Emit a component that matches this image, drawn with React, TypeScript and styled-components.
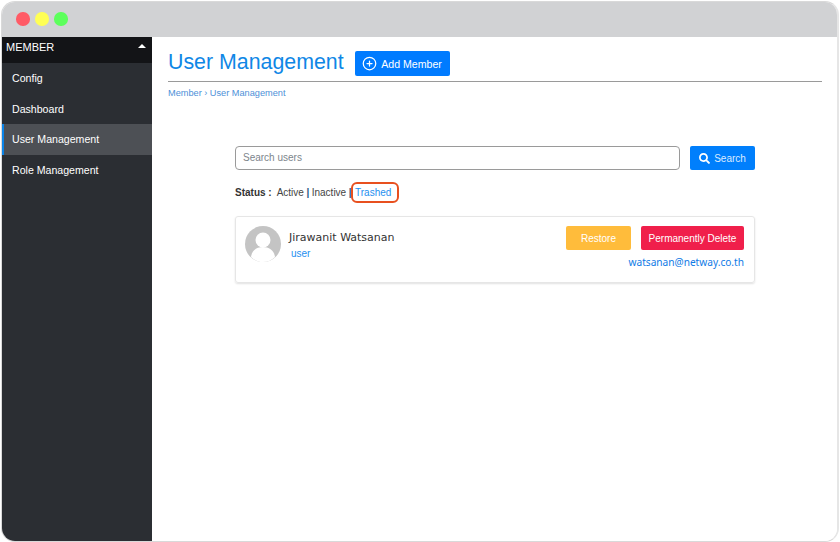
import styled, { createGlobalStyle } from "styled-components";
import { FaSearch } from "react-icons/fa";
import { FiPlusCircle } from "react-icons/fi";

const Global = createGlobalStyle`
  html, body {
    margin: 0;
    padding: 0;
    background: #fff;
    font-family: "Liberation Sans", Arial, sans-serif;
  }
  * {
    box-sizing: border-box;
  }
`;

const Page = styled.div`
  width: 840px;
  height: 542px;
  padding: 1px 1px 0 1px;
  overflow: hidden;
`;

const Frame = styled.div`
  width: 838px;
  height: 541px;
  display: flex;
  flex-direction: column;
  border: 1px solid #d9d9d9;
  border-right: 2px solid #e6e6e6;
  border-radius: 14px;
  overflow: hidden;
`;

const TitleBar = styled.div`
  height: 35px;
  flex-shrink: 0;
  display: flex;
  align-items: center;
  gap: 5.5px;
  padding: 0 0 1px 14px;
  background: #d1d2d4;
`;

const Dot = styled.span<{ $color: string }>`
  width: 13.5px;
  height: 13.5px;
  border-radius: 50%;
  background: ${(p) => p.$color};
`;

const Body = styled.div`
  flex: 1;
  display: flex;
  min-height: 0;
`;

const Sidebar = styled.aside`
  width: 150px;
  flex-shrink: 0;
  background: #2b2e33;
`;

const SideHead = styled.div`
  height: 26px;
  display: flex;
  align-items: center;
  justify-content: space-between;
  padding: 0 6px 6px 4px;
  background: #131417;
  color: #fff;
  font-size: 11px;
`;

const Caret = styled.span`
  width: 0;
  height: 0;
  border-left: 4px solid transparent;
  border-right: 4px solid transparent;
  border-bottom: 4px solid #fff;
  margin-bottom: 2px;
`;

const SideItem = styled.div<{ $active?: boolean }>`
  height: 30.6px;
  display: flex;
  align-items: center;
  padding-left: ${(p) => (p.$active ? "8px" : "10px")};
  border-left: ${(p) => (p.$active ? "2px solid #0a84e8" : "none")};
  background: ${(p) => (p.$active ? "#4d5055" : "transparent")};
  color: #fff;
  font-size: 10.6px;
`;

const Main = styled.main`
  flex: 1;
  min-width: 0;
  padding: 13px 15px 0 16px;
  background: #fff;
`;

const Header = styled.div`
  height: 31px;
  display: flex;
  align-items: flex-start;
  gap: 11px;
`;

const Title = styled.h1`
  margin: 0;
  color: #0f87e6;
  font-size: 21.35px;
  line-height: 24px;
  font-weight: 400;
  white-space: nowrap;
`;

const AddButton = styled.button`
  height: 25px;
  width: 95px;
  margin-top: 1px;
  display: flex;
  align-items: center;
  justify-content: center;
  gap: 4px;
  border: none;
  border-radius: 2px;
  background: #007bff;
  color: #fff;
  font-family: inherit;
  font-size: 10.6px;
  padding: 0;
`;

const Divider = styled.hr`
  margin: 0;
  border: none;
  border-top: 1px solid #9a9a9a;
`;

const Breadcrumb = styled.div`
  margin-top: 5px;
  color: #4d90d8;
  font-size: 9.2px;
  line-height: 12px;
`;

const Content = styled.div`
  width: 520px;
  margin: 47px 0 0 67px;
`;

const SearchRow = styled.div`
  display: flex;
  gap: 10px;
`;

const SearchInput = styled.input`
  flex: 1;
  height: 24px;
  padding: 0 7px 1px;
  border: 1px solid #9a9a9a;
  border-radius: 4px;
  font-family: inherit;
  font-size: 10px;
  outline: none;
  &::placeholder {
    color: #7d858c;
    opacity: 1;
  }
`;

const SearchButton = styled.button`
  width: 65px;
  height: 24px;
  display: flex;
  align-items: center;
  justify-content: center;
  gap: 4px;
  border: none;
  border-radius: 2px;
  background: #007ffc;
  color: #dcebff;
  font-family: inherit;
  font-size: 10px;
  padding: 0;
`;

const StatusRow = styled.div`
  height: 24px;
  margin-top: 10px;
  display: flex;
  align-items: center;
  color: #444;
  font-size: 10px;
  white-space: nowrap;
`;

const StatusLabel = styled.b`
  color: #333;
  margin-right: 5px;
`;

const Sep = styled.span`
  color: #2a5a85;
  margin: 0 2.5px;
  font-weight: 700;
`;

const Current = styled.span`
  position: relative;
  color: #1e8ff0;
  margin-left: 1px;
  &::after {
    content: "";
    position: absolute;
    inset: -5px -8px -5px -4px;
    border: 2px solid #e8501f;
    border-radius: 6px;
  }
`;

const Card = styled.div`
  height: 67px;
  margin-top: 12px;
  display: flex;
  justify-content: space-between;
  padding: 9px 10px 0 9px;
  border: 1px solid #e6e6e6;
  border-radius: 3px;
  box-shadow: 0 1px 2px rgba(0, 0, 0, 0.12);
`;

const UserSide = styled.div`
  display: flex;
  gap: 8px;
`;

const Avatar = styled.svg`
  width: 36px;
  height: 36px;
  flex-shrink: 0;
`;

const UserName = styled.div`
  margin-top: 5px;
  color: #333;
  font-family: "DejaVu Sans", sans-serif;
  font-size: 11px;
  line-height: 14px;
`;

const UserRole = styled.div`
  margin: 2px 0 0 2px;
  color: #1e8ff0;
  font-size: 10px;
  line-height: 14px;
`;

const ActionSide = styled.div`
  display: flex;
  flex-direction: column;
  align-items: flex-end;
  gap: 5px;
`;

const Actions = styled.div`
  display: flex;
  gap: 10px;
`;

const ActionButton = styled.button<{ $bg: string; $w: number }>`
  width: ${(p) => p.$w}px;
  height: 24px;
  border: none;
  border-radius: 2px;
  background: ${(p) => p.$bg};
  color: #fff;
  font-family: inherit;
  font-size: 10px;
  padding: 0;
`;

const Email = styled.div`
  color: #0f7be6;
  font-family: "Noto Sans", sans-serif;
  font-size: 10.15px;
  line-height: 14px;
`;

export default function App() {
  return (
    <Page>
      <Global />
      <Frame>
        <TitleBar>
          <Dot $color="#ff5b66" />
          <Dot $color="#ffff55" />
          <Dot $color="#5cff5c" />
        </TitleBar>
        <Body>
          <Sidebar>
            <SideHead>
              MEMBER
              <Caret />
            </SideHead>
            <SideItem>Config</SideItem>
            <SideItem>Dashboard</SideItem>
            <SideItem $active>User Management</SideItem>
            <SideItem>Role Management</SideItem>
          </Sidebar>
          <Main>
            <Header>
              <Title>User Management</Title>
              <AddButton>
                <FiPlusCircle size={15} />
                Add Member
              </AddButton>
            </Header>
            <Divider />
            <Breadcrumb>Member › User Management</Breadcrumb>
            <Content>
              <SearchRow>
                <SearchInput placeholder="Search users" />
                <SearchButton>
                  <FaSearch size={11} color="#fff" />
                  Search
                </SearchButton>
              </SearchRow>
              <StatusRow>
                <StatusLabel>Status :</StatusLabel>
                Active
                <Sep>|</Sep>
                Inactive
                <Sep>|</Sep>
                <Current>Trashed</Current>
              </StatusRow>
              <Card>
                <UserSide>
                  <Avatar viewBox="0 0 36 36">
                    <circle cx="18" cy="18" r="18" fill="#c4c4c4" />
                    <circle cx="18" cy="14" r="7.5" fill="#fff" />
                    <path d="M6 31c1-7 6-10 12-10s11 3 12 10c-3 3-7 5-12 5s-9-2-12-5z" fill="#fff" />
                  </Avatar>
                  <div>
                    <UserName>Jirawanit Watsanan</UserName>
                    <UserRole>user</UserRole>
                  </div>
                </UserSide>
                <ActionSide>
                  <Actions>
                    <ActionButton $bg="#ffbc3b" $w={65}>Restore</ActionButton>
                    <ActionButton $bg="#f01f4b" $w={103}>Permanently Delete</ActionButton>
                  </Actions>
                  <Email>watsanan@netway.co.th</Email>
                </ActionSide>
              </Card>
            </Content>
          </Main>
        </Body>
      </Frame>
    </Page>
  );
}
